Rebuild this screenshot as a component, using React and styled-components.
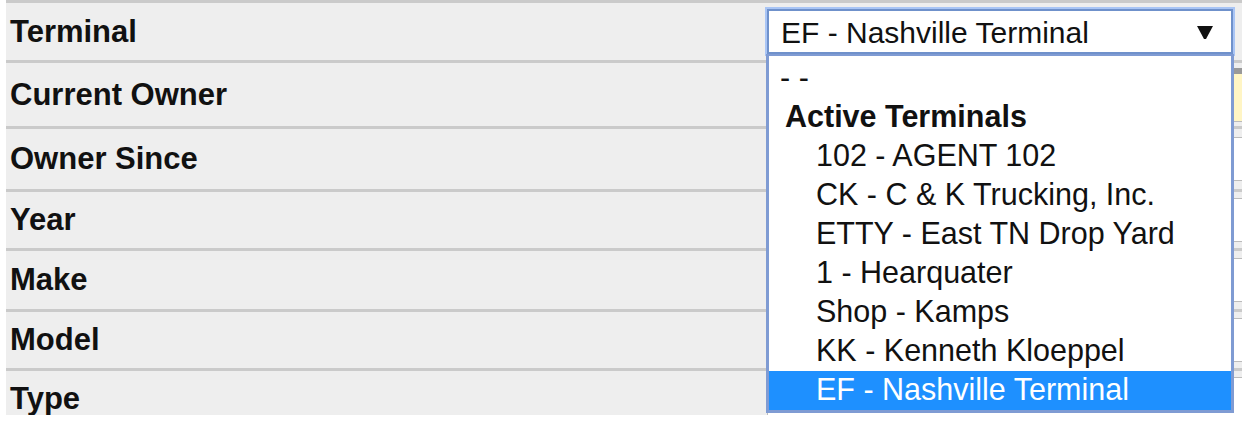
import React from "react";
import styled, { createGlobalStyle } from "styled-components";

const GlobalStyle = createGlobalStyle`
  html, body {
    margin: 0;
    padding: 0;
    background: #fff;
  }
  body {
    font-family: "Liberation Sans", Arial, sans-serif;
  }
`;

const Frame = styled.div`
  position: relative;
  width: 1236px;
  height: 415px;
  margin-left: 6px;
  overflow: hidden;
  background: #eee;
`;

const Row = styled.div`
  display: grid;
  grid-template-columns: 761px 1fr;
  align-items: center;
  height: ${(p) => p.$h}px;
  border-top: 3px solid #cacaca;
`;

const Label = styled.div`
  padding-left: 4px;
  font-size: 31px;
  font-weight: bold;
  color: #111;
  white-space: nowrap;
`;

const Field = styled.div`
  display: flex;
  align-items: center;
  height: 100%;
`;

const Dropdown = styled.div`
  position: relative;
  width: 466px;
`;

const SelectBox = styled.div`
  box-sizing: border-box;
  display: flex;
  align-items: center;
  justify-content: space-between;
  height: 45px;
  padding: 2px 18px 0 12px;
  background: #fff;
  border: 2px solid #6f91cb;
  box-shadow: 0 0 0 2px #a9c5f5;
  font-size: 30px;
  color: #111;
  white-space: nowrap;
`;

const Menu = styled.ul`
  position: absolute;
  top: 100%;
  left: -1px;
  z-index: 2;
  box-sizing: border-box;
  width: 468px;
  margin: 0;
  padding: 3px 0 0;
  list-style: none;
  background: #fff;
  border: 3px solid #7f9bd3;
  border-top: 2px solid #7f9bd3;
`;

const Item = styled.li`
  height: 39px;
  line-height: 37px;
  padding-left: ${(p) => (p.$group ? 16 : p.$nested ? 47 : 11)}px;
  font-size: 30.5px;
  font-weight: ${(p) => (p.$group ? "bold" : "normal")};
  color: ${(p) => (p.$selected ? "#fff" : "#111")};
  background: ${(p) => (p.$selected ? "#1e90ff" : "transparent")};
  white-space: nowrap;
`;

const TextInput = styled.div`
  box-sizing: border-box;
  width: 480px;
  height: ${(p) => p.$h}px;
  background: ${(p) => (p.$required ? "#fff5c4" : "#fff")};
  border: 1px solid #bbb;
  border-top: ${(p) => (p.$required ? "6px solid #999" : "1px solid #bbb")};
`;

const Arrow = () => (
  <svg width="16" height="13" viewBox="0 0 16 13">
    <polygon points="0,0 16,0 9,13 7,13" fill="#111" />
  </svg>
);

const options = [
  { text: "- -" },
  { text: "Active Terminals", group: true },
  { text: "102 - AGENT 102", nested: true },
  { text: "CK - C & K Trucking, Inc.", nested: true },
  { text: "ETTY - East TN Drop Yard", nested: true },
  { text: "1 - Hearquater", nested: true },
  { text: "Shop - Kamps", nested: true },
  { text: "KK - Kenneth Kloeppel", nested: true },
  { text: "EF - Nashville Terminal", nested: true, selected: true },
];

const rows = [
  { label: "Current Owner", h: 63, input: 54, required: true },
  { label: "Owner Since", h: 60, input: 44 },
  { label: "Year", h: 56, input: 44 },
  { label: "Make", h: 58, input: 44 },
  { label: "Model", h: 56, input: 44 },
  { label: "Type", h: 56, input: 44 },
];

const App = () => {
  return (
    <>
      <GlobalStyle />
      <Frame>
        <Row $h={57}>
          <Label>Terminal</Label>
          <Field>
            <Dropdown>
              <SelectBox>
                <span>EF - Nashville Terminal</span>
                <Arrow />
              </SelectBox>
              <Menu>
                {options.map((o, i) => (
                  <Item
                    key={i}
                    $group={o.group}
                    $nested={o.nested}
                    $selected={o.selected}
                  >
                    {o.text}
                  </Item>
                ))}
              </Menu>
            </Dropdown>
          </Field>
        </Row>
        {rows.map((r) => (
          <Row key={r.label} $h={r.h}>
            <Label>{r.label}</Label>
            <Field>
              <TextInput $h={r.input} $required={r.required} />
            </Field>
          </Row>
        ))}
      </Frame>
    </>
  );
};

export default App;
